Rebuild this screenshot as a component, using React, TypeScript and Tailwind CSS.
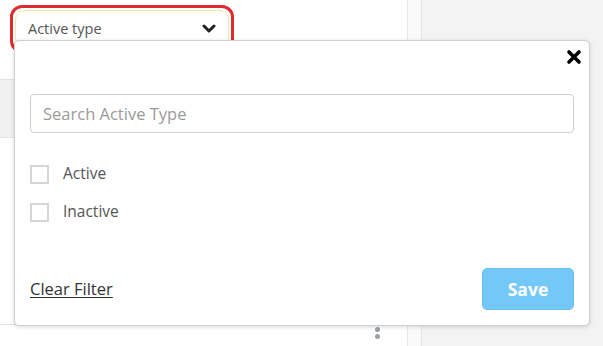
import { useState } from 'react'

const OPTIONS = ['Active', 'Inactive']

export default function App() {
  const [checked, setChecked] = useState<string[]>([])

  const toggle = (o: string) =>
    setChecked(c => (c.includes(o) ? c.filter(x => x !== o) : [...c, o]))

  return (
    <div
      className="relative w-[603px] h-[346px] overflow-hidden bg-[#f3f3f3]"
      style={{ fontFamily: '"Open Sans", Lato, sans-serif' }}
    >
      {/* background page */}
      <div className="flex h-full">
        <div className="w-[408px] bg-white flex flex-col border-r border-[#e6e6e6]">
          <div className="h-[80px] border-b border-[#e2e2e2]" />
          <div className="h-[58px] bg-[#f0f0f0] border-b border-[#e6e6e6]" />
          <div className="flex-1" />
          <div className="h-[22px] border-t border-[#e0e0e0] flex justify-end pr-[27px]">
            <div className="flex flex-col gap-[2px] pt-[2px]">
              <span className="w-[5px] h-[5px] rounded-full bg-[#9aa0a6]" />
              <span className="w-[5px] h-[5px] rounded-full bg-[#9aa0a6]" />
            </div>
          </div>
        </div>
        <div className="w-[14px] bg-[#fafafa] border-r border-[#e6e6e6]" />
        <div className="flex-1" />
      </div>

      {/* trigger */}
      <div className="absolute left-[10px] top-[5px] w-[224px] h-[48px] rounded-[12px] border-[3px] border-[#e12a2e] p-[2px]">
        <div className="h-full rounded-[10px] border border-[#ece9a8] bg-white flex items-center justify-between pl-[12px] pr-[12px]">
          <span className="text-[14.5px] text-[#555]">Active type</span>
          <svg width="14" height="10" viewBox="0 0 14 10">
            <path d="M2 2 L7 7 L12 2" fill="none" stroke="#222" strokeWidth="3" strokeLinecap="round" strokeLinejoin="round" />
          </svg>
        </div>
      </div>

      {/* popover */}
      <div className="absolute left-[14px] top-[40px] w-[576px] h-[286px] bg-white border border-[#cfcfcf] rounded-[5px] shadow-[0_1px_4px_rgba(0,0,0,0.15)] flex flex-col px-[15px]">
        <div className="flex justify-end pt-[8px] -mr-[8px] h-[53px]">
          <svg width="16" height="16" viewBox="0 0 16 16">
            <path d="M3 3 L13 13 M13 3 L3 13" stroke="#000" strokeWidth="3.6" strokeLinecap="round" />
          </svg>
        </div>
        <input
          placeholder="Search Active Type"
          className="h-[39px] w-full border border-[#cfcfcf] rounded-[4px] px-[12px] text-[16.5px] text-[#333] placeholder:text-[#9a9a9a] outline-none"
        />
        <div className="flex flex-col gap-[18px] mt-[31px]">
          {OPTIONS.map(o => (
            <label key={o} className="flex items-center gap-[14px] cursor-pointer h-[20px]">
              <span
                onClick={() => toggle(o)}
                className={`w-[19px] h-[19px] border-2 ${checked.includes(o) ? 'border-[#6ec6f9] bg-[#6ec6f9]' : 'border-[#d6d6d6]'}`}
              />
              <span className="text-[15.5px] text-[#555]">{o}</span>
            </label>
          ))}
        </div>
        <div className="flex-1" />
        <div className="flex items-center justify-between pb-[15px]">
          <button className="text-[16.5px] text-[#333] underline underline-offset-2">Clear Filter</button>
          <button className="w-[92px] h-[42px] rounded-[5px] bg-[#74c8f8] border border-[#6abfee] text-white font-bold text-[17.5px]">
            Save
          </button>
        </div>
      </div>
    </div>
  )
}
